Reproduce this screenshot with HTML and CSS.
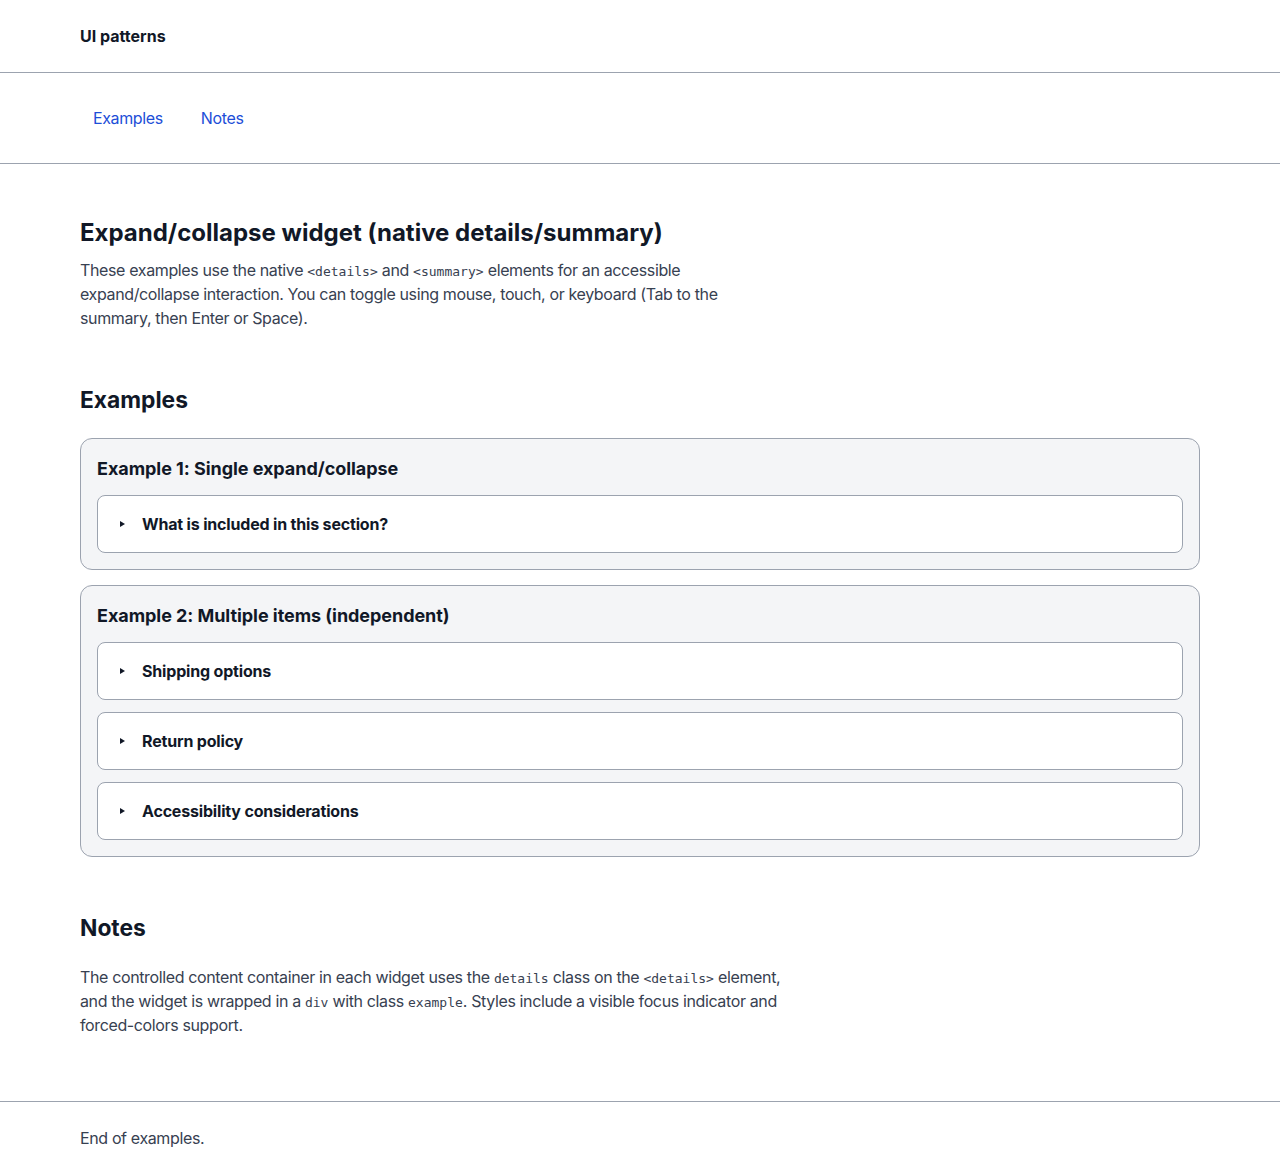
FILE: index.html
```html
<!DOCTYPE html>
<html lang="en">
<head>
<meta charset="utf-8">
<title>UI patterns</title>
<link rel="stylesheet" href="styles.css">
</head>
<body>
<header class="site-header">
  <div class="container">
    <p class="brand">UI patterns</p>
  </div>
</header>
<nav class="site-nav">
  <div class="container nav-list">
    <a class="nav-link" href="#examples">Examples</a>
    <a class="nav-link" href="#notes">Notes</a>
  </div>
</nav>
<main class="container main">
  <h1 class="title">Expand/collapse widget (native details/summary)</h1>
  <p class="lead">These examples use the native <code>&lt;details&gt;</code> and <code>&lt;summary&gt;</code> elements for an accessible expand/collapse interaction. You can toggle using mouse, touch, or keyboard (Tab to the summary, then Enter or Space).</p>

  <section class="section" id="examples">
    <h2 class="section-title">Examples</h2>
    <div class="example">
      <h3 class="example-title">Example 1: Single expand/collapse</h3>
      <details class="details">
        <summary class="summary">What is included in this section?</summary>
        <p>This section includes an overview of the pattern.</p>
      </details>
    </div>
    <div class="example">
      <h3 class="example-title">Example 2: Multiple items (independent)</h3>
      <details class="details">
        <summary class="summary">Shipping options</summary>
        <p>Standard and express shipping are available.</p>
      </details>
      <details class="details">
        <summary class="summary">Return policy</summary>
        <p>Returns are accepted within 30 days.</p>
      </details>
      <details class="details">
        <summary class="summary">Accessibility considerations</summary>
        <p>Use native elements where possible.</p>
      </details>
    </div>
  </section>

  <section class="section section-notes" id="notes">
    <h2 class="section-title section-title-tight">Notes</h2>
    <p class="notes">The controlled content container in each widget uses the <code>details</code> class on the <code>&lt;details&gt;</code> element, and the widget is wrapped in a <code>div</code> with class <code>example</code>. Styles include a visible focus indicator and forced-colors support.</p>
  </section>
</main>
<footer class="site-footer">
  <div class="container">
    <p class="footer-text">End of examples.</p>
  </div>
</footer>
</body>
</html>
```

FILE: styles.css
```css
* { box-sizing: border-box; }
html, body { margin: 0; padding: 0; }
body {
  font-family: Inter, "Noto Sans", "Liberation Sans", sans-serif;
  font-size: 16px;
  line-height: 24px;
  letter-spacing: -0.37px;
  color: #374151;
  background: #ffffff;
}
.container {
  max-width: 1280px;
  padding: 0 80px;
  margin: 0 auto;
}
.site-header {
  border-bottom: 1px solid #9ca3af;
  padding: 24px 0;
}
.brand {
  margin: 0;
  font-size: 16px;
  font-weight: 700;
  color: #111827;
  line-height: 24px;
  letter-spacing: 0;
}
.site-nav {
  border-bottom: 1px solid #9ca3af;
  padding: 25px 0;
}
.nav-list {
  display: flex;
  gap: 12px;
}
.nav-link {
  display: inline-block;
  padding: 8px 13px;
  color: #1d4ed8;
  text-decoration: none;
  line-height: 24px;
}
.main {
  padding-top: 52px;
  padding-bottom: 64px;
}
.title {
  margin: 0 0 8px;
  font-size: 24px;
  line-height: 34px;
  font-weight: 700;
  letter-spacing: 0;
  color: #111827;
}
.lead {
  margin: 0;
  max-width: 670px;
}
code {
  font-family: "DejaVu Sans Mono", "Liberation Mono", monospace;
  font-size: 13px;
  line-height: 0;
  letter-spacing: 0;
}
.section { margin-top: 56px; }
.section-notes { margin-top: 57px; }
.section-title {
  margin: 0 0 24px;
  font-size: 22.8px;
  line-height: 28px;
  font-weight: 700;
  letter-spacing: 0;
  color: #111827;
}
.section-title-tight { margin-bottom: 23px; }
.example {
  background: #f4f5f7;
  border: 1px solid #9ca3af;
  border-radius: 12px;
  padding: 16px;
}
.example + .example { margin-top: 15px; }
.example-title {
  margin: 0 0 12px;
  font-size: 18px;
  line-height: 28px;
  font-weight: 700;
  letter-spacing: -0.05px;
  color: #111827;
}
.details {
  background: #ffffff;
  border: 1px solid #9ca3af;
  border-radius: 8px;
  padding: 16px;
}
.details + .details { margin-top: 12px; }
.details p { margin: 8px 0 0; }
.summary {
  list-style: none;
  display: flex;
  align-items: center;
  gap: 17px;
  padding-left: 6px;
  font-weight: 700;
  letter-spacing: -0.18px;
  color: #111827;
  cursor: pointer;
}
.summary::-webkit-details-marker { display: none; }
.summary::before {
  content: "";
  width: 0;
  height: 0;
  border-top: 3.5px solid transparent;
  border-bottom: 3.5px solid transparent;
  border-left: 5px solid #111827;
}
.notes {
  margin: 0;
  max-width: 720px;
}
.site-footer {
  border-top: 1px solid #9ca3af;
  padding: 24px 0;
}
.footer-text { margin: 0; }
```
